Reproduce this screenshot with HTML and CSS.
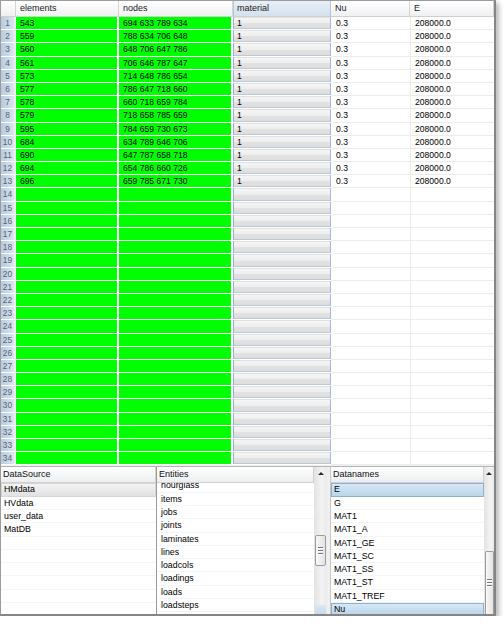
FILE: index.html
```html
<!DOCTYPE html>
<html>
<head>
<meta charset="utf-8">
<link rel="stylesheet" href="styles.css">
</head>
<body>
<div class="window">
  <div class="grid">
    <div class="h corner"></div><div class="h">elements</div><div class="h">nodes</div><div class="h sel">material</div><div class="h">Nu</div><div class="h">E</div>
    <div class="rn">1</div><div class="g">543</div><div class="g">694 633 789 634</div><div class="m">1</div><div class="w">0.3</div><div class="w e">208000.0</div>
    <div class="rn">2</div><div class="g">559</div><div class="g">788 634 706 648</div><div class="m">1</div><div class="w">0.3</div><div class="w e">208000.0</div>
    <div class="rn">3</div><div class="g">560</div><div class="g">648 706 647 786</div><div class="m">1</div><div class="w">0.3</div><div class="w e">208000.0</div>
    <div class="rn">4</div><div class="g">561</div><div class="g">706 646 787 647</div><div class="m">1</div><div class="w">0.3</div><div class="w e">208000.0</div>
    <div class="rn">5</div><div class="g">573</div><div class="g">714 648 786 654</div><div class="m">1</div><div class="w">0.3</div><div class="w e">208000.0</div>
    <div class="rn">6</div><div class="g">577</div><div class="g">786 647 718 660</div><div class="m">1</div><div class="w">0.3</div><div class="w e">208000.0</div>
    <div class="rn">7</div><div class="g">578</div><div class="g">660 718 659 784</div><div class="m">1</div><div class="w">0.3</div><div class="w e">208000.0</div>
    <div class="rn">8</div><div class="g">579</div><div class="g">718 658 785 659</div><div class="m">1</div><div class="w">0.3</div><div class="w e">208000.0</div>
    <div class="rn">9</div><div class="g">595</div><div class="g">784 659 730 673</div><div class="m">1</div><div class="w">0.3</div><div class="w e">208000.0</div>
    <div class="rn">10</div><div class="g">684</div><div class="g">634 789 646 706</div><div class="m">1</div><div class="w">0.3</div><div class="w e">208000.0</div>
    <div class="rn">11</div><div class="g">690</div><div class="g">647 787 658 718</div><div class="m">1</div><div class="w">0.3</div><div class="w e">208000.0</div>
    <div class="rn">12</div><div class="g">694</div><div class="g">654 786 660 726</div><div class="m">1</div><div class="w">0.3</div><div class="w e">208000.0</div>
    <div class="rn">13</div><div class="g">696</div><div class="g">659 785 671 730</div><div class="m">1</div><div class="w">0.3</div><div class="w e">208000.0</div>
    <div class="rn">14</div><div class="g"></div><div class="g"></div><div class="m"></div><div class="w"></div><div class="w e"></div>
    <div class="rn">15</div><div class="g"></div><div class="g"></div><div class="m"></div><div class="w"></div><div class="w e"></div>
    <div class="rn">16</div><div class="g"></div><div class="g"></div><div class="m"></div><div class="w"></div><div class="w e"></div>
    <div class="rn">17</div><div class="g"></div><div class="g"></div><div class="m"></div><div class="w"></div><div class="w e"></div>
    <div class="rn">18</div><div class="g"></div><div class="g"></div><div class="m"></div><div class="w"></div><div class="w e"></div>
    <div class="rn">19</div><div class="g"></div><div class="g"></div><div class="m"></div><div class="w"></div><div class="w e"></div>
    <div class="rn">20</div><div class="g"></div><div class="g"></div><div class="m"></div><div class="w"></div><div class="w e"></div>
    <div class="rn">21</div><div class="g"></div><div class="g"></div><div class="m"></div><div class="w"></div><div class="w e"></div>
    <div class="rn">22</div><div class="g"></div><div class="g"></div><div class="m"></div><div class="w"></div><div class="w e"></div>
    <div class="rn">23</div><div class="g"></div><div class="g"></div><div class="m"></div><div class="w"></div><div class="w e"></div>
    <div class="rn">24</div><div class="g"></div><div class="g"></div><div class="m"></div><div class="w"></div><div class="w e"></div>
    <div class="rn">25</div><div class="g"></div><div class="g"></div><div class="m"></div><div class="w"></div><div class="w e"></div>
    <div class="rn">26</div><div class="g"></div><div class="g"></div><div class="m"></div><div class="w"></div><div class="w e"></div>
    <div class="rn">27</div><div class="g"></div><div class="g"></div><div class="m"></div><div class="w"></div><div class="w e"></div>
    <div class="rn">28</div><div class="g"></div><div class="g"></div><div class="m"></div><div class="w"></div><div class="w e"></div>
    <div class="rn">29</div><div class="g"></div><div class="g"></div><div class="m"></div><div class="w"></div><div class="w e"></div>
    <div class="rn">30</div><div class="g"></div><div class="g"></div><div class="m"></div><div class="w"></div><div class="w e"></div>
    <div class="rn">31</div><div class="g"></div><div class="g"></div><div class="m"></div><div class="w"></div><div class="w e"></div>
    <div class="rn">32</div><div class="g"></div><div class="g"></div><div class="m"></div><div class="w"></div><div class="w e"></div>
    <div class="rn">33</div><div class="g"></div><div class="g"></div><div class="m"></div><div class="w"></div><div class="w e"></div>
    <div class="rn">34</div><div class="g"></div><div class="g"></div><div class="m"></div><div class="w"></div><div class="w e"></div>
  </div>
  <div class="panels">
    <div class="ds">
      <div class="ph">DataSource</div>
      <div class="list">
        <div class="it gsel">HMdata</div>
        <div class="it">HVdata</div>
        <div class="it">user_data</div>
        <div class="it">MatDB</div>
        <div class="it"></div><div class="it"></div><div class="it"></div><div class="it"></div><div class="it"></div><div class="it"></div>
      </div>
    </div>
    <div class="ent">
      <div class="ph">Entities</div>
      <div class="list">
        <div class="scrolled">
          <div class="it">hourglass</div>
          <div class="it">items</div>
          <div class="it">jobs</div>
          <div class="it">joints</div>
          <div class="it">laminates</div>
          <div class="it">lines</div>
          <div class="it">loadcols</div>
          <div class="it">loadings</div>
          <div class="it">loads</div>
          <div class="it">loadsteps</div>
          <div class="it">materials</div>
        </div>
      </div>
    </div>
    <div class="sb">
      <div class="up"><span class="tri"></span></div>
      <div class="thumb t1"><span class="grip"></span><span class="grip"></span><span class="grip"></span></div>
      <div class="down"></div>
    </div>
    <div class="gap"></div>
    <div class="dn">
      <div class="ph">Datanames</div>
      <div class="list">
        <div class="it bsel">E</div>
        <div class="it">G</div>
        <div class="it">MAT1</div>
        <div class="it">MAT1_A</div>
        <div class="it">MAT1_GE</div>
        <div class="it">MAT1_SC</div>
        <div class="it">MAT1_SS</div>
        <div class="it">MAT1_ST</div>
        <div class="it">MAT1_TREF</div>
        <div class="it bsel">Nu</div>
      </div>
    </div>
    <div class="sb sb2">
      <div class="up"><span class="tri"></span></div>
      <div class="thumb t2"><span class="grip"></span><span class="grip"></span><span class="grip"></span></div>
    </div>
  </div>
</div>
</body>
</html>
```
FILE: styles.css
```css
* { box-sizing: border-box; }
body {
  margin: 0;
  background: #fff;
  font-family: "Liberation Sans", Arial, sans-serif;
  font-size: 8.6px;
  color: #000;
}
.window {
  width: 496px;
  height: 616px;
  border: 1px solid #9c9c9c;
  border-right: 2px solid #858585;
  border-bottom: 2px solid #858585;
  box-shadow: 3px 3px 5px rgba(0, 0, 0, 0.28);
  display: flex;
  flex-direction: column;
  background: #f0f0f0;
  overflow: hidden;
}
.grid {
  flex: none;
  display: grid;
  grid-template-columns: 15px 103px 114px 98px 79px 84px;
  grid-template-rows: 16px repeat(34, 13.2px);
  background: #fff;
}
.h {
  background: linear-gradient(#ffffff, #eff0f2);
  border-right: 1px solid #d5d5d5;
  border-bottom: 1px solid #d0d0d0;
  line-height: 15px;
  padding-left: 4px;
  font-size: 9px;
  color: #1a1a1a;
  white-space: nowrap;
  overflow: hidden;
}
.h.corner { padding: 0; }
.h.sel {
  background: linear-gradient(#e7eff7, #d5e1ee);
  border-left: 1px solid #b3c6da;
  border-right: 1px solid #b3c6da;
  padding-left: 3px;
}
.rn {
  background: linear-gradient(to right, #b7cbdf, #dbe5ef);
  border-right: 2px solid #edf1f5;
  border-bottom: 1px solid #fff;
  color: #59636f;
  text-align: center;
  font-size: 8.4px;
  line-height: 12.2px;
}
.g {
  background: #00ff00;
  border-right: 2px solid #fff;
  border-bottom: 1px solid #fff;
  padding-left: 4px;
  line-height: 12.2px;
  white-space: nowrap;
}
.m {
  background: linear-gradient(#f7f7f7 0%, #ededed 50%, #e2e2e2 51%, #dddddd 100%);
  border-bottom: 1px solid #fff;
  box-shadow: inset 1px 0 #93b4d6, inset -1px 0 #9fbcda, inset 0 -1px #b9c9da, inset 0 1px #e0e0e0;
  padding-left: 4px;
  line-height: 12.2px;
}
.w {
  background: #fff;
  border-bottom: 1px solid #ececec;
  padding-left: 5px;
  line-height: 12.2px;
}
.w.e {
  border-left: 1px solid #ececec;
  padding-left: 4px;
}
.panels {
  flex: 1;
  min-height: 0;
  display: flex;
  margin-top: 1px;
  border-top: 1px solid #b4b4b4;
}
.ds, .ent, .dn {
  display: flex;
  flex-direction: column;
  background: #fff;
  min-height: 0;
}
.ds { width: 156px; border-right: 1px solid #9a9a9a; }
.ent { width: 157px; }
.dn { width: 154px; border-left: 1px solid #c8c8c8; }
.ph {
  flex: none;
  height: 16px;
  background: linear-gradient(#ffffff, #eceef0);
  border-bottom: 1px solid #d0d0d0;
  border-right: 1px solid #d0d0d0;
  padding-left: 2px;
  line-height: 15px;
  font-size: 9px;
  color: #111;
}
.list {
  flex: 1;
  min-height: 0;
  overflow: hidden;
  background: #fff;
}
.scrolled { margin-top: -4px; }
.it {
  height: 13.3px;
  line-height: 12.3px;
  padding-left: 3px;
  border-bottom: 1px solid #f3f5f7;
  font-size: 8.8px;
  white-space: nowrap;
}
.ent .it { padding-left: 4px; }
.dn .it { padding-left: 3px; }
.it.gsel {
  background: linear-gradient(#f3f3f3, #e1e1e1);
  border: 1px solid #d6d6d6;
  line-height: 11.3px;
  padding-left: 2px;
}
.it.bsel {
  background: linear-gradient(#d6e7f4, #bcd5e9);
  border: 1px solid #8db2d1;
  line-height: 11.3px;
  padding-left: 2px;
}
.sb {
  width: 13px;
  flex: none;
  background: linear-gradient(to right, #e2e2e2, #f3f3f3 60%, #eaeaea);
  display: flex;
  flex-direction: column;
  align-items: center;
}
.sb2 { width: 10px; }
.up {
  flex: none;
  height: 13px;
  width: 100%;
  display: flex;
  justify-content: center;
  align-items: center;
}
.tri {
  width: 0;
  height: 0;
  border-left: 3px solid transparent;
  border-right: 3px solid transparent;
  border-bottom: 3px solid #2a2a2a;
}
.thumb {
  flex: none;
  width: 11px;
  border: 1px solid #9d9d9d;
  border-radius: 2px;
  background: linear-gradient(to right, #f8f8f8, #e3e3e3);
  display: flex;
  flex-direction: column;
  justify-content: center;
  align-items: center;
  gap: 1px;
}
.t1 { margin-top: 55px; height: 31px; }
.t2 { margin-top: 71px; flex: 1; width: 9px; border-bottom: none; border-radius: 2px 2px 0 0; }
.grip {
  width: 5px;
  height: 1px;
  background: #767676;
  box-shadow: 0 1px #fff;
  margin-bottom: 1px;
}
.down {
  margin-top: auto;
  flex: none;
  height: 9px;
  width: 11px;
  background: linear-gradient(#dbe8f3, #c6dbec);
}
.gap {
  width: 3px;
  flex: none;
  background: #f0f0f0;
}
```
